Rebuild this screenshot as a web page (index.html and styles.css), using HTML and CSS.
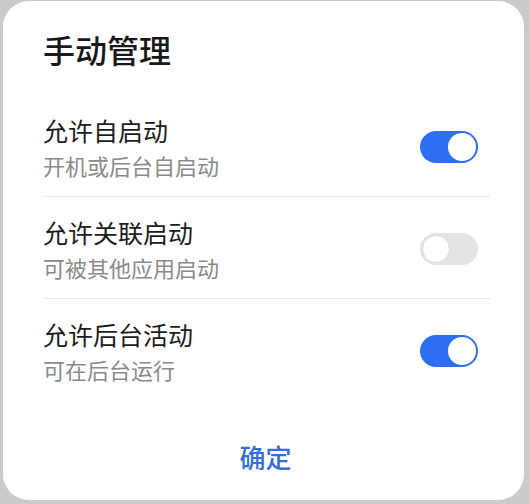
FILE: index.html
```html
<!DOCTYPE html>
<html lang="zh-CN">
<head>
<meta charset="utf-8">
<title>手动管理</title>
<link rel="stylesheet" href="styles.css">
</head>
<body>
<div class="dialog">
  <h1 class="title">手动管理</h1>
  <div class="list">
    <div class="row">
      <div class="text">
        <div class="label">允许自启动</div>
        <div class="desc">开机或后台自启动</div>
      </div>
      <div class="switch on"><span class="knob"></span></div>
    </div>
    <div class="row">
      <div class="text">
        <div class="label">允许关联启动</div>
        <div class="desc">可被其他应用启动</div>
      </div>
      <div class="switch"><span class="knob"></span></div>
    </div>
    <div class="row last">
      <div class="text">
        <div class="label">允许后台活动</div>
        <div class="desc">可在后台运行</div>
      </div>
      <div class="switch on"><span class="knob"></span></div>
    </div>
  </div>
  <div class="actions">
    <button class="confirm">确定</button>
  </div>
</div>
</body>
</html>
```

FILE: styles.css
```css
html, body {
  margin: 0;
  padding: 0;
}
body {
  background: #cbcbcb;
  width: 529px;
  height: 504px;
  overflow: hidden;
  padding: 1px 0 0 3px;
  box-sizing: border-box;
  font-family: "Noto Sans CJK SC", "Noto Sans", sans-serif;
}
.dialog {
  width: 521px;
  height: 499px;
  background: #ffffff;
  border-radius: 26px;
  box-sizing: border-box;
  padding: 26px 34px 0 40px;
  display: flex;
  flex-direction: column;
}
.title {
  margin: 0;
  font-size: 32px;
  line-height: 44px;
  font-weight: 500;
  color: #181818;
}
.list {
  margin-top: 24px;
  display: flex;
  flex-direction: column;
}
.row {
  display: flex;
  align-items: center;
  justify-content: space-between;
  padding: 18px 0 16px;
  border-bottom: 1px solid #e9e9e9;
}
.row.last {
  border-bottom: none;
}
.label {
  font-size: 25px;
  line-height: 34px;
  color: #1c1c1c;
}
.desc {
  margin-top: 3px;
  font-size: 22px;
  line-height: 30px;
  color: #8a8a8a;
}
.switch {
  width: 58px;
  height: 32px;
  border-radius: 16px;
  background: #e4e4e4;
  margin-right: 12px;
  display: flex;
  align-items: center;
  padding: 0 2px;
  box-sizing: border-box;
}
.switch .knob {
  width: 28px;
  height: 28px;
  border-radius: 50%;
  background: #ffffff;
  box-sizing: border-box;
  border: 1px solid #dcdcdc;
}
.switch.on {
  background: #2d6ef3;
  justify-content: flex-end;
}
.switch.on .knob {
  border: none;
}
.actions {
  margin-top: 37px;
  display: flex;
  justify-content: center;
  padding-right: 2px;
}
.confirm {
  border: none;
  background: none;
  padding: 0;
  font-family: "Noto Sans CJK SC", "Noto Sans", sans-serif;
  font-size: 26px;
  line-height: 40px;
  font-weight: 500;
  color: #346ed9;
}
```
